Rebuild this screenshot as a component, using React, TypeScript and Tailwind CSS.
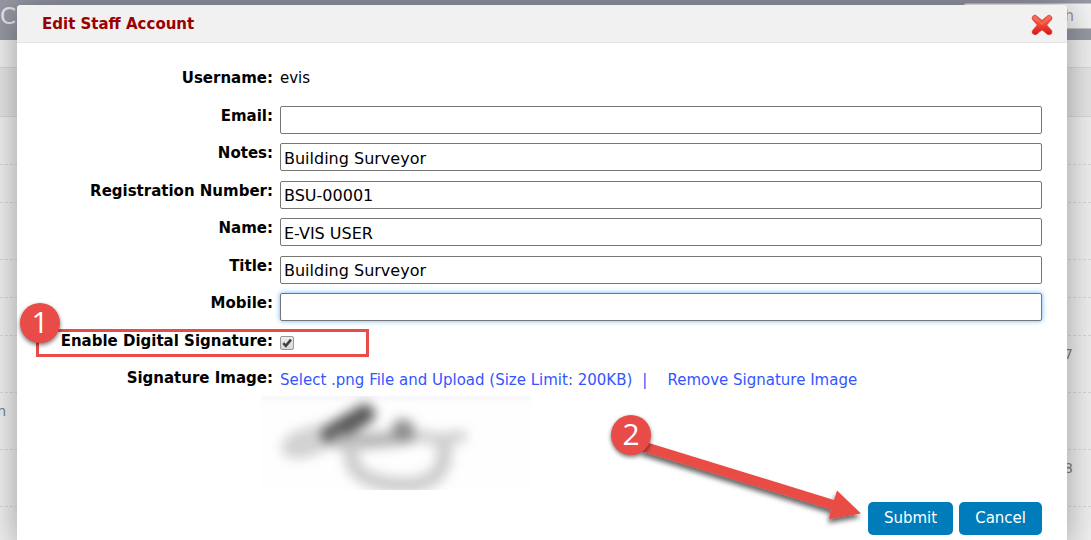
import { useState } from "react";
import type { ReactNode } from "react";

type TextField = { id: string; label: string; value: string; focused?: boolean };

const textFields: TextField[] = [
  { id: "email", label: "Email:", value: "" },
  { id: "notes", label: "Notes:", value: "Building Surveyor" },
  { id: "registration", label: "Registration Number:", value: "BSU-00001" },
  { id: "name", label: "Name:", value: "E-VIS USER" },
  { id: "title", label: "Title:", value: "Building Surveyor" },
  { id: "mobile", label: "Mobile:", value: "", focused: true },
];

const labelClass =
  "w-64 shrink-0 text-right text-[15px] leading-7 font-bold text-black";

function BackgroundRow({
  height,
  left,
  right,
}: {
  height: string;
  left?: string;
  right?: string;
}) {
  return (
    <div
      className={`${height} flex shrink-0 justify-between border-b border-dashed border-[#d8d8d8] pt-2 pr-[18px] text-[14px] leading-5 text-[#808080]`}
    >
      <span className="flex w-1.5 justify-end">{left}</span>
      <span>{right}</span>
    </div>
  );
}

function Background() {
  return (
    <div className="flex h-full flex-col bg-[#f0f0f0]" aria-hidden="true">
      <div className="flex h-10 shrink-0 items-start justify-between bg-[#9799a6]">
        <span className="text-[23px] leading-8 text-[#e8e8ec]">Ci</span>
        <div className="mt-[3px] flex h-[26px] w-32 items-center justify-end rounded-l border border-r-0 border-[#c4c4c8] bg-[#f4f4f4] pr-[17px] text-[15px] text-[#999]">
          Search
        </div>
      </div>
      <div className="h-7 shrink-0 border-b border-[#d8d8d8]" />
      <div className="h-[49px] shrink-0 border-b border-[#d8d8d8] bg-[#e6e6e6]" />
      <BackgroundRow height="h-12" />
      <BackgroundRow height="h-[38px]" />
      <BackgroundRow height="h-[57px]" />
      <BackgroundRow height="h-[38px]" />
      <BackgroundRow height="h-[38px]" />
      <BackgroundRow height="h-[57px]" right="7" />
      <BackgroundRow height="h-[57px]" left="n" />
      <BackgroundRow height="h-[57px]" right="8" />
    </div>
  );
}

function CloseIcon() {
  return (
    <svg width="22" height="22" viewBox="0 0 22 22" aria-hidden="true">
      <defs>
        <linearGradient id="closeFill" x1="0" y1="0" x2="0" y2="1">
          <stop offset="0" stopColor="#f4705a" />
          <stop offset="0.5" stopColor="#ee4433" />
          <stop offset="1" stopColor="#d8141c" />
        </linearGradient>
      </defs>
      <path
        d="M4.600 1.200 11 6.400 17.400 1.200Q19.600 1 20.800 3.200 21.200 5 20 6.200L15.600 11 20.200 16Q21.300 17.500 20.600 19.400 18.800 21 16.800 20.600L11 15.800 5.200 20.600Q3 21 1.400 19.200.800 17.200 2 16L6.400 11 2 6.200Q.800 4.500 1.400 2.800 2.800.800 4.600 1.200Z"
        fill="url(#closeFill)"
        stroke="#d5302b"
        strokeWidth="0.8"
      />
      <path
        d="M3.5 3.6 11 10 18.4 3.6"
        fill="none"
        stroke="#fb8c78"
        strokeWidth="1.4"
        opacity="0.5"
      />
    </svg>
  );
}

function Signature() {
  return (
    <svg
      width="270"
      height="94"
      viewBox="0 0 270 94"
      role="img"
      aria-label="Signature"
      className="block"
    >
      <defs>
        <filter
          id="soft"
          x="-20%"
          y="-40%"
          width="140%"
          height="180%"
          colorInterpolationFilters="sRGB"
        >
          <feGaussianBlur stdDeviation="6" />
        </filter>
        <linearGradient id="paper" x1="0" y1="0" x2="0" y2="1">
          <stop offset="0" stopColor="#f8f8fc" />
          <stop offset="0.08" stopColor="#fefefe" />
        </linearGradient>
      </defs>
      <rect width="270" height="94" fill="url(#paper)" />
      <g filter="url(#soft)" fill="none" strokeLinecap="round">
        <path d="M28 52Q30 40 62 36" stroke="#d2d2d2" strokeWidth="15" />
        <path d="M28 54Q44 60 66 44" stroke="#d2d2d2" strokeWidth="14" />
        <path d="M70 38 104 18" stroke="#585858" strokeWidth="20" />
        <path d="M78 45Q112 46 150 40" stroke="#b4b4b4" strokeWidth="15" />
        <circle cx="142" cy="34" r="11" fill="#8c8c8c" />
        <path
          d="M92 52C84 74 106 88 142 89 174 89 186 74 183 48"
          stroke="#cccccc"
          strokeWidth="15"
        />
        <path d="M160 40Q180 46 200 40" stroke="#cfcfcf" strokeWidth="12" />
      </g>
    </svg>
  );
}

function StepBadge({ place, children }: { place: string; children: ReactNode }) {
  return (
    <span
      className={`absolute ${place} flex size-10 items-center justify-center rounded-full bg-[#e94b48] pb-0.5 font-['Open_Sans',sans-serif] text-[30px] leading-none text-white shadow-[0_2px_4px_rgba(0,0,0,0.55)]`}
    >
      {children}
    </span>
  );
}

function StepArrow() {
  return (
    <svg
      width="270"
      height="100"
      viewBox="0 0 270 100"
      className="pointer-events-none absolute right-[163px] bottom-0"
      aria-hidden="true"
    >
      <defs>
        <filter id="arrowShadow" x="-10%" y="-20%" width="120%" height="150%">
          <feDropShadow dx="-1" dy="4" stdDeviation="2.5" floodOpacity="0.6" />
        </filter>
      </defs>
      <path
        d="M40 8 225 65 228 55.500 252 78.500 220 84 222 74.500 32 16Z"
        fill="#e94b44"
        filter="url(#arrowShadow)"
      />
    </svg>
  );
}

export default function App() {
  const [values, setValues] = useState<Record<string, string>>(() =>
    Object.fromEntries(textFields.map((f) => [f.id, f.value])),
  );
  const [digital, setDigital] = useState(true);

  return (
    <div className="relative h-screen overflow-hidden font-['DejaVu_Sans',Verdana,sans-serif]">
      <Background />
      <div className="absolute inset-x-0 top-[5px] pr-6 pl-[17px]">
        <section
          role="dialog"
          aria-labelledby="dialog-title"
          className="rounded-t bg-white shadow-[0_0_36px_rgba(0,0,0,0.36)]"
        >
          <header className="flex h-[38px] items-center justify-between rounded-t border-b border-[#e4e4e4] bg-[#f1f1f1] pr-3.5 pl-[25px]">
            <h1 id="dialog-title" className="pt-0.5 text-[15px] font-bold text-[#990000]">
              Edit Staff Account
            </h1>
            <button type="button" aria-label="Close" className="pt-0.5">
              <CloseIcon />
            </button>
          </header>

          <form className="pt-[21px] pr-[25px] pb-3" onSubmit={(e) => e.preventDefault()}>
            <div className="grid min-h-[300px] auto-rows-fr">
              <div className="flex gap-[7px]">
                <span className={labelClass}>Username:</span>
                <span className="text-[15px] leading-7 text-black">evis</span>
              </div>
              {textFields.map((field) => (
                <div key={field.id} className="flex gap-[7px]">
                  <label htmlFor={field.id} className={labelClass}>
                    {field.label}
                  </label>
                  <input
                    id={field.id}
                    type="text"
                    value={values[field.id]}
                    onChange={(e) => setValues({ ...values, [field.id]: e.target.value })}
                    className={`mt-1 h-7 min-w-0 grow rounded-xs border border-[#767676] bg-white px-[3px] pt-0.5 text-[16px] text-black outline-none ${
                      field.focused ? "shadow-[0_0_5px_rgba(81,167,255,0.9)]" : ""
                    }`}
                  />
                </div>
              ))}
              <div className="relative flex gap-[7px]">
                <span className="absolute top-0.5 left-[19px] h-7 w-[333px] border-3 border-[#e94b48]" />
                <label htmlFor="digital" className={`${labelClass} relative`}>
                  Enable Digital Signature:
                </label>
                <span className="relative mt-[9px] size-3.5">
                  <input
                    id="digital"
                    type="checkbox"
                    checked={digital}
                    onChange={(e) => setDigital(e.target.checked)}
                    className="block size-3.5 appearance-none rounded-xs border border-[#999] bg-linear-to-b from-[#eee] to-[#d8d8d8]"
                  />
                  {digital && (
                    <svg
                      viewBox="0 0 14 14"
                      className="pointer-events-none absolute inset-0 size-3.5"
                      aria-hidden="true"
                    >
                      <path
                        d="M3.200 7.200 5.800 9.800 11 3.600"
                        fill="none"
                        stroke="#404040"
                        strokeWidth="2.6"
                      />
                    </svg>
                  )}
                </span>
                <StepBadge place="-top-6 left-[3px]">1</StepBadge>
              </div>
            </div>

            <div className="flex h-8 gap-[7px]">
              <span className={labelClass}>Signature Image:</span>
              <p className="flex pt-0.5 text-[15px] leading-7 text-[#3355ff]">
                <a href="#upload" className="flex gap-2.5">
                  <span>Select .png File and Upload (Size Limit: 200KB)</span>
                  <span>|</span>
                </a>
                <a href="#remove" className="ml-5">
                  Remove Signature Image
                </a>
              </p>
            </div>
            <div className="pl-[244px]">
              <Signature />
            </div>

            <div className="relative flex justify-end gap-1.5 pt-3">
              <StepArrow />
              <StepBadge place="right-[391px] bottom-20">2</StepBadge>
              <button
                type="submit"
                className="h-[33px] rounded-[5px] bg-[#007cba] px-4 text-[15px] text-white"
              >
                Submit
              </button>
              <button
                type="button"
                className="h-[33px] rounded-[5px] bg-[#007cba] px-4 text-[15px] text-white"
              >
                Cancel
              </button>
            </div>
          </form>
        </section>
      </div>
    </div>
  );
}
